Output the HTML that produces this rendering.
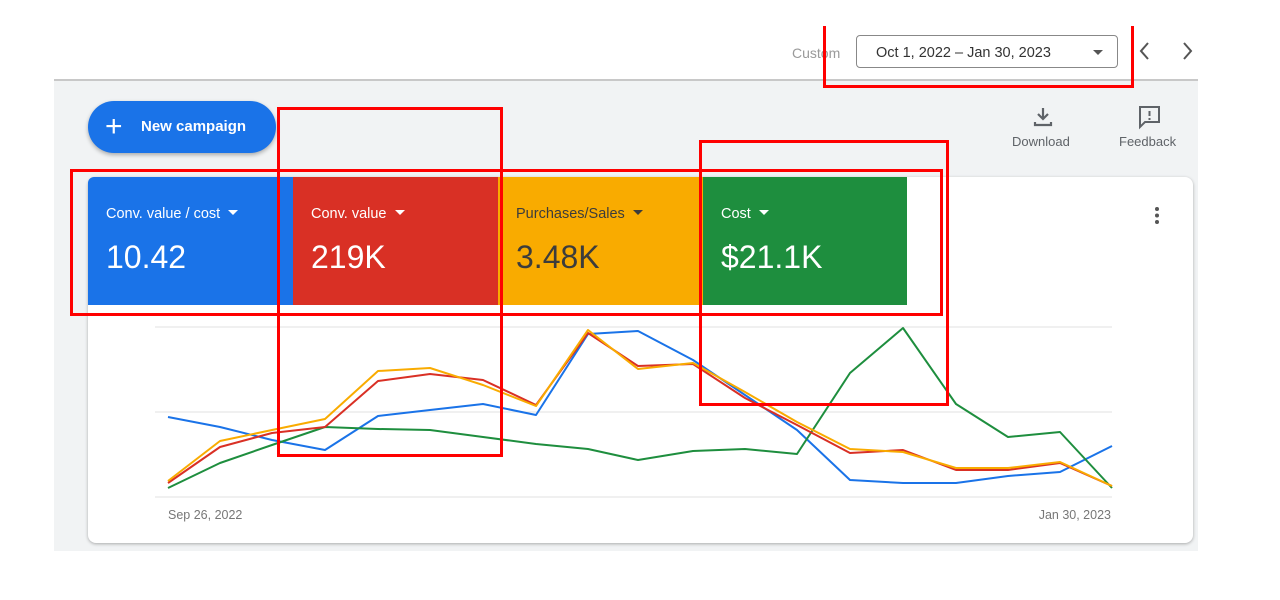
<!DOCTYPE html>
<html><head><style>
body{margin:0;width:1280px;height:600px;background:#fff;position:relative;overflow:hidden;font-family:"Liberation Sans",Arial,sans-serif}
.abs{position:absolute}
.gray{left:54px;top:79px;width:1144px;height:470px;background:#f1f3f4;border-top:2px solid #c8c8c8}
.card{left:88px;top:177px;width:1105px;height:366px;background:#fff;border-radius:8px;box-shadow:0 1px 3px rgba(0,0,0,.3)}
.tile{top:177px;height:128px;width:205px;color:#fff}
.tile .l{position:absolute;left:18px;top:29px;font-size:14.5px}
.tile .v{position:absolute;left:18px;top:62px;font-size:32px}
.tri{display:inline-block;width:0;height:0;border-left:5px solid transparent;border-right:5px solid transparent;border-top:5px solid currentColor;margin-left:8px;vertical-align:middle;margin-top:-3px}
.red{border:3px solid #f00;box-sizing:border-box}
</style></head><body>
<div class="abs" style="left:792px;top:45px;font-size:14px;color:#9a9a9a">Custom</div>
<div class="abs" style="left:856px;top:35px;width:262px;height:33px;border:1px solid #888;border-radius:4px;box-sizing:border-box;font-size:14.5px;color:#333;padding-left:19px;padding-top:9px">Oct 1, 2022 – Jan 30, 2023<span class="tri" style="position:absolute;right:14px;top:14px;margin:0;color:#555"></span></div>
<svg class="abs" style="left:1132px;top:40px" width="70" height="22"><path d="M16 3 L9 11 L16 19" stroke="#555" stroke-width="2" fill="none"/><path d="M52 3 L59 11 L52 19" stroke="#555" stroke-width="2" fill="none"/></svg>
<div class="abs gray"></div>
<div class="abs" style="left:88px;top:101px;width:188px;height:52px;border-radius:26px;background:#1a73e8;box-shadow:0 2px 4px rgba(0,0,0,.3);color:#fff;font-weight:bold;font-size:15px;line-height:52px"><span style="position:absolute;left:17px;top:0;font-size:30px;font-weight:normal">+</span><span style="position:absolute;left:53px">New campaign</span></div>
<svg class="abs" style="left:1031px;top:105px" width="24" height="24"><path d="M12 3v11M7 9l5 5 5-5" stroke="#5f6368" stroke-width="2.2" fill="none"/><path d="M4 17v3h16v-3" stroke="#5f6368" stroke-width="2.2" fill="none"/></svg>
<div class="abs" style="left:1012px;top:134px;font-size:13px;color:#5f6368">Download</div>
<svg class="abs" style="left:1137px;top:104px" width="26" height="26"><path d="M3 3h19v15H8l-5 5z" stroke="#5f6368" stroke-width="2" fill="none"/><path d="M12.5 7v5M12.5 14v2" stroke="#5f6368" stroke-width="2"/></svg>
<div class="abs" style="left:1119px;top:134px;font-size:13px;color:#5f6368">Feedback</div>
<div class="abs card"></div>
<div class="abs tile" style="left:88px;background:#1a73e8;border-top-left-radius:6px"><span class="l">Conv. value / cost<span class="tri"></span></span><span class="v">10.42</span></div>
<div class="abs tile" style="left:293px;background:#d93025"><span class="l">Conv. value<span class="tri"></span></span><span class="v">219K</span></div>
<div class="abs tile" style="left:498px;background:#f9ab00;color:#3c3c3c"><span class="l">Purchases/Sales<span class="tri"></span></span><span class="v">3.48K</span></div>
<div class="abs tile" style="left:703px;width:204px;background:#1e8e3e"><span class="l">Cost<span class="tri"></span></span><span class="v">$21.1K</span></div>
<svg class="abs" style="left:1152px;top:206px" width="10" height="20"><circle cx="5" cy="3" r="2" fill="#555"/><circle cx="5" cy="9.5" r="2" fill="#555"/><circle cx="5" cy="16" r="2" fill="#555"/></svg>
<svg class="abs" style="left:0;top:0" width="1280" height="600">
<g stroke="#e6e6e6" stroke-width="1.3"><line x1="155" y1="327" x2="1112" y2="327"/><line x1="155" y1="412" x2="1112" y2="412"/><line x1="155" y1="497" x2="1112" y2="497"/></g>
<g fill="none" stroke-width="2" stroke-linejoin="round">
<polyline stroke="#1a73e8" points="168,417 220,427 272,440 325,450 378,416 430,410 483,404 536,415 588,334 638,331 693,360 745,395 797,430 850,480 903,483 956,483 1008,476 1060,472 1112,446"/>
<polyline stroke="#1e8e3e" points="168,488 220,463 272,445 325,427 378,429 430,430 483,437 536,444 588,449 638,460 693,451 745,449 797,454 850,373 903,328 956,404 1008,437 1060,432 1112,488"/>
<polyline stroke="#d93025" points="168,483 220,447 272,433 325,427 378,381 430,374 483,380 536,405 588,333 638,366 693,364 745,398 797,425 850,453 903,450 956,470 1008,470 1060,463 1112,486"/>
<polyline stroke="#f9ab00" points="168,481 220,441 272,430 325,419 378,371 430,368 483,385 536,406 588,330 638,369 693,363 745,392 797,422 850,449 903,452 956,468 1008,468 1060,462 1112,486"/>
</g>
<text x="168" y="519" font-size="12.5" fill="#777" font-family="Liberation Sans">Sep 26, 2022</text>
<text x="1111" y="519" font-size="12.5" fill="#777" font-family="Liberation Sans" text-anchor="end">Jan 30, 2023</text>
</svg>
<div class="abs red" style="left:823px;top:26px;width:311px;height:62px;border-top:none"></div>
<div class="abs red" style="left:277px;top:107px;width:226px;height:350px"></div>
<div class="abs red" style="left:70px;top:169px;width:873px;height:147px"></div>
<div class="abs red" style="left:699px;top:140px;width:250px;height:266px"></div>
</body></html>
